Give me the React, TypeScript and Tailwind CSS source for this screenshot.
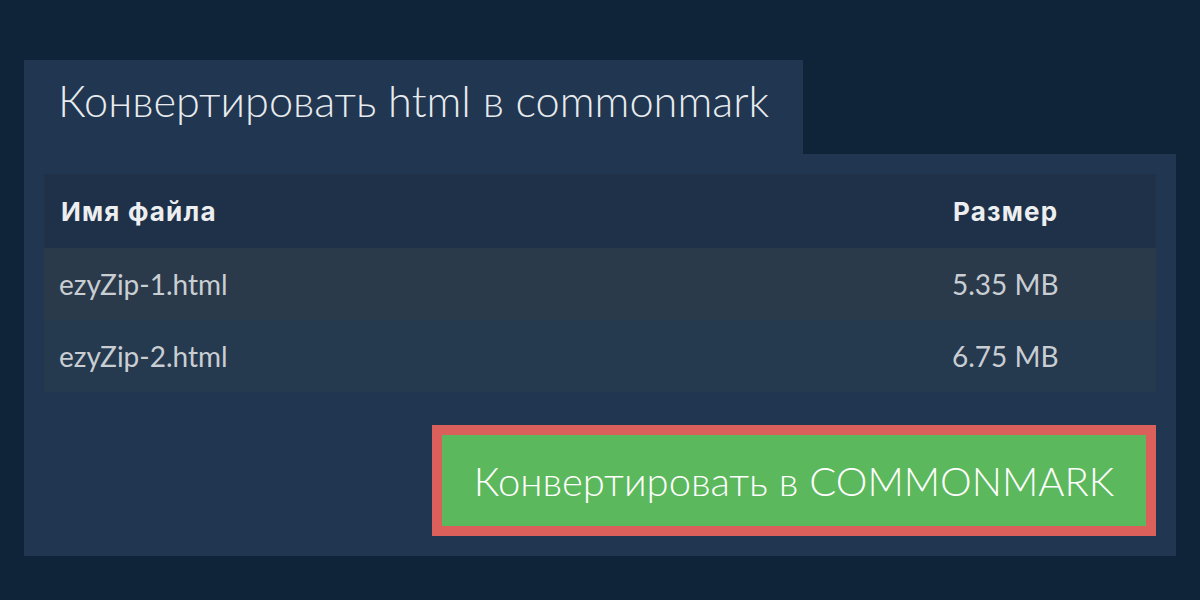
export default function App() {
  const files = [
    { name: "ezyZip-1.html", size: "5.35 MB" },
    { name: "ezyZip-2.html", size: "6.75 MB" },
  ];

  return (
    <div className="h-[600px] w-[1200px] bg-[#0f2339] pt-[60px] pl-6 font-['Lato',sans-serif]">
      {/* Заголовок-вкладка */}
      <div className="flex">
        <div className="h-[94px] bg-[#213650] pl-[34px] pr-[34px] pt-[15px]">
          <h1 className="text-[43.3px] font-light leading-[50px] text-[#e8ebee]">
            Конвертировать html в commonmark
          </h1>
        </div>
      </div>

      {/* Панель */}
      <div className="w-[1152px] bg-[#213650] p-5">
        <div className="w-full">
          <div className="grid h-[74px] grid-cols-[1fr_219px] items-center bg-[#1e3148] font-['Inter',sans-serif] text-[26px] font-bold tracking-[1.2px] text-[#eceef0]">
            <div className="pl-[17px]">Имя файла</div>
            <div className="pl-[16px]">Размер</div>
          </div>
          {files.map((f, i) => (
            <div
              key={f.name}
              className={
                "grid h-[72px] grid-cols-[1fr_219px] items-center text-[28px] text-[#c9ced3] " +
                (i % 2 === 0 ? "bg-[#2b3a4b]" : "bg-[#25394f]")
              }
            >
              <div className="pl-[15px]">{f.name}</div>
              <div className="pl-[15px]">{f.size}</div>
            </div>
          ))}
        </div>

        <div className="mt-[33px] flex justify-end">
          <button className="flex h-[111px] w-[724px] items-center justify-center border-[10px] border-[#db605c] bg-[#5cb85c] text-[40px] font-light text-white">
            Конвертировать в COMMONMARK
          </button>
        </div>
      </div>
    </div>
  );
}
